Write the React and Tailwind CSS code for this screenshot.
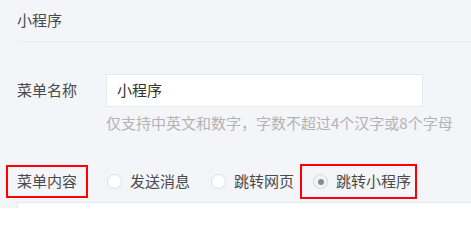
import React from 'react'

const font = { fontFamily: '"Noto Sans CJK SC", "Noto Sans", sans-serif' }

function Radio({ label, checked }) {
  return (
    <span className="flex items-center gap-[8px]">
      <span
        className={`flex h-[15px] w-[15px] items-center justify-center rounded-full border ${
          checked ? 'border-[#d6d8dc] bg-[#f2f3f5]' : 'border-[#dcdfe4] bg-white'
        }`}
      >
        {checked && <span className="h-[6px] w-[6px] rounded-full bg-[#8c8c8c]" />}
      </span>
      <span>{label}</span>
    </span>
  )
}

export default function App() {
  return (
    <div
      className="h-[208px] w-[471px] overflow-hidden bg-[#f4f5f9] pl-[17px] text-[15px] text-[#4a4a4a]"
      style={font}
    >
      <div className="flex h-[42px] items-center border-b border-[#eaecf0] pb-[1px]">小程序</div>

      <div className="mt-[32px] flex items-center">
        <div className="w-[89px]">菜单名称</div>
        <div className="flex h-[33px] w-[317px] items-center border border-[#e6e8ec] bg-white px-[10px] text-[#333]">
          小程序
        </div>
      </div>
      <div className="ml-[89px] mt-[5px] leading-[22px] text-[#b3b3b3]">
        仅支持中英文和数字，字数不超过4个汉字或8个字母
      </div>

      <div className="mt-[30px] flex items-center">
        <div className="w-[89px]">
          <span className="-ml-[11px] flex h-[33px] w-[82px] items-center border-2 border-[#ff0000] pl-[9px]">
            菜单内容
          </span>
        </div>
        <div className="ml-[1px] flex items-center">
          <Radio label="发送消息" />
          <span className="ml-[21px]">
            <Radio label="跳转网页" />
          </span>
          <span className="ml-[6px] flex h-[35px] items-center border-2 border-[#ff0000] pl-[11px] pr-[4px]">
            <Radio label="跳转小程序" checked />
          </span>
        </div>
      </div>

      <div className="mt-[3px] h-[20px] border-l border-t border-[#e4e6ea] bg-white" />
    </div>
  )
}
